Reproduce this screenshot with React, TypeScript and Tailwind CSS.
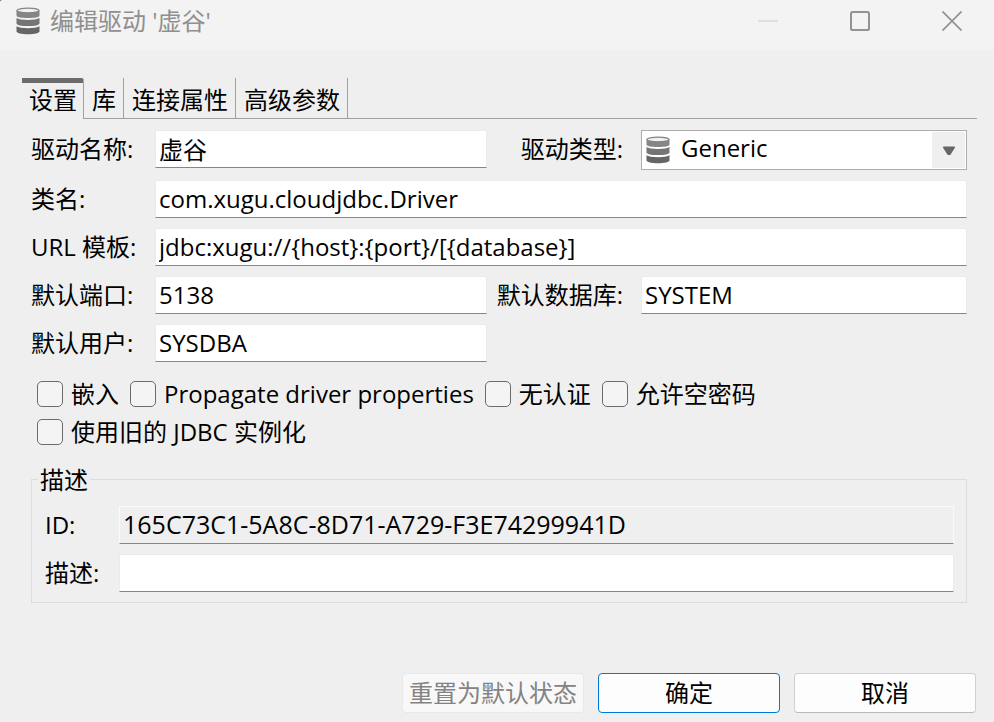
import { useId, useState } from 'react';
import type { ReactNode } from 'react';

const inputClass =
  'block h-[38px] w-full min-w-0 border border-[#ebebeb] border-b-[#868686] bg-white pb-[2px] pl-[3px] pr-1 leading-8 text-black outline-none';

function DatabaseIcon({ className }: { className?: string }) {
  return (
    <svg viewBox="0 0 24 28" className={className} aria-hidden="true">
      <path d="M.5 3.600V8.500c0 1.800 5 2.500 11.500 2.500s11.500-.7 11.500-2.500V3.600z" fill="#858585" />
      <ellipse cx="12" cy="3.500" rx="11" ry="2.400" fill="#f1f1f1" stroke="#858585" strokeWidth="1.200" />
      <path d="M2.500 4.600c2.500 1.400 16.500 1.400 19 0l1.500 1.400H1z" fill="#858585" />
      <path d="M.5 11c1.800 1.300 6 2 11.500 2s9.700-.7 11.500-2v5.500c0 1.600-5 2.600-11.500 2.600S.5 18.100.5 16.500z" fill="#757575" />
      <path d="M.5 19.200c1.800 1.300 6 2 11.500 2s9.700-.7 11.500-2v5.300c0 1.600-5 2.700-11.500 2.700S.5 26.100.5 24.500z" fill="#666666" />
    </svg>
  );
}

function TitleBar() {
  return (
    <header className="flex h-[50px] items-start justify-between bg-[#f3f3f3] pl-4 pr-8 text-[#8f8f8f]">
      <div className="flex h-[42px] items-center gap-[10px]">
        <DatabaseIcon className="h-7 w-6" />
        <h1 className="leading-8">编辑驱动 '虚谷'</h1>
      </div>
      <div className="flex h-[42px] items-center gap-[72px]">
        <button type="button" aria-label="最小化" disabled>
          <svg viewBox="0 0 20 20" className="block size-5" fill="none" stroke="#dfdfdf" strokeWidth="2">
            <path d="M0 10h20" />
          </svg>
        </button>
        <button type="button" aria-label="最大化">
          <svg viewBox="0 0 20 20" className="block size-5" fill="none" stroke="#929292" strokeWidth="2">
            <rect x="1" y="1" width="18" height="18" rx="1.500" />
          </svg>
        </button>
        <button type="button" aria-label="关闭">
          <svg viewBox="0 0 20 20" className="block size-5" fill="none" stroke="#929292" strokeWidth="1.700">
            <path d="M.5.5l19 19M19.500.5l-19 19" />
          </svg>
        </button>
      </div>
    </header>
  );
}

const tabs = ['设置', '库', '连接属性', '高级参数'];

function TabBar() {
  return (
    <div role="tablist" className="flex h-[41px] pl-[22px] pr-[17px]">
      {tabs.map((tab, index) =>
        index === 0 ? (
          <button
            key={tab}
            type="button"
            role="tab"
            aria-selected="true"
            className="rounded-tr-[3px] border-r border-t-[5px] border-r-[#a0a0a0] border-t-[#6b6b6b] pb-[2px] pl-[7px] pr-[6px] leading-[34px]"
          >
            {tab}
          </button>
        ) : (
          <button
            key={tab}
            type="button"
            role="tab"
            aria-selected="false"
            className="border-b border-r border-[#a0a0a0] pb-px pl-2 pr-[7px] pt-[5px] leading-[34px]"
          >
            {tab}
          </button>
        ),
      )}
      <div className="flex-1 border-b border-[#a0a0a0]" />
    </div>
  );
}

function Label({ htmlFor, end, children }: { htmlFor: string; end?: boolean; children: ReactNode }) {
  return (
    <label
      htmlFor={htmlFor}
      className={end ? 'whitespace-nowrap pr-[18px] text-right leading-[38px]' : 'whitespace-nowrap leading-[38px]'}
    >
      {children}
    </label>
  );
}

function CheckBox({ label }: { label: string }) {
  const id = useId();
  return (
    <div className="flex h-[38px] items-center gap-2">
      <input
        id={id}
        type="checkbox"
        className="size-[26px] shrink-0 appearance-none rounded-[5px] border border-[#6b6b6b] bg-[#f4f4f4] checked:bg-[#0067c0]"
      />
      <label htmlFor={id} className="whitespace-nowrap leading-[38px]">
        {label}
      </label>
    </div>
  );
}

export default function App() {
  const [name, setName] = useState('虚谷');
  const [className, setClassName] = useState('com.xugu.cloudjdbc.Driver');
  const [url, setUrl] = useState('jdbc:xugu://{host}:{port}/[{database}]');
  const [port, setPort] = useState('5138');
  const [database, setDatabase] = useState('SYSTEM');
  const [user, setUser] = useState('SYSDBA');
  const [description, setDescription] = useState('');

  return (
    <div className="bg-[#666666]">
      <div className="flex min-h-screen flex-col overflow-hidden rounded-tl-[3px] bg-[#efefef] font-['Open_Sans','Noto_Sans_CJK_SC',sans-serif] text-[24px] text-black">
        <TitleBar />
        <main className="flex flex-1 flex-col pt-7">
          <TabBar />
          <form className="flex flex-1 flex-col" onSubmit={(event) => event.preventDefault()}>
            <div className="pl-[31px] pr-[27px] pt-[11px]">
              <div className="grid grid-cols-[124px_minmax(0,332fr)_154px_minmax(0,326fr)] items-start gap-y-[10px]">
                <Label htmlFor="name">驱动名称:</Label>
                <input id="name" className={inputClass} value={name} onChange={(e) => setName(e.target.value)} />
                <Label htmlFor="type" end>
                  驱动类型:
                </Label>
                <div className="relative">
                  <select
                    id="type"
                    className="block h-10 w-full appearance-none border border-[#acacb0] bg-white pb-[5px] pl-[39px] pr-10 leading-8 outline-none"
                  >
                    <option>Generic</option>
                  </select>
                  <DatabaseIcon className="pointer-events-none absolute left-[5px] top-[6px] h-7 w-6" />
                  <span className="pointer-events-none absolute bottom-[2px] right-[2px] top-[2px] flex w-[33px] items-center justify-center bg-[#efefef]">
                    <svg viewBox="0 0 14 10" className="mt-[2px] h-[10px] w-[14px]" aria-hidden="true">
                      <path d="M1.500.5h11l.6 1L8.300 9H5.700L.9 1.500z" fill="#666666" />
                    </svg>
                  </span>
                </div>

                <Label htmlFor="class">类名:</Label>
                <div className="col-span-3">
                  <input id="class" className={inputClass} value={className} onChange={(e) => setClassName(e.target.value)} />
                </div>

                <Label htmlFor="url">URL 模板:</Label>
                <div className="col-span-3">
                  <input id="url" className={inputClass} value={url} onChange={(e) => setUrl(e.target.value)} />
                </div>

                <Label htmlFor="port">默认端口:</Label>
                <input id="port" className={inputClass} value={port} onChange={(e) => setPort(e.target.value)} />
                <Label htmlFor="database" end>
                  默认数据库:
                </Label>
                <input id="database" className={inputClass} value={database} onChange={(e) => setDatabase(e.target.value)} />

                <Label htmlFor="user">默认用户:</Label>
                <input id="user" className={inputClass} value={user} onChange={(e) => setUser(e.target.value)} />
              </div>

              <div className="flex flex-wrap gap-x-[11px] pl-[6px] pt-[13px]">
                <CheckBox label="嵌入" />
                <CheckBox label="Propagate driver properties" />
                <CheckBox label="无认证" />
                <CheckBox label="允许空密码" />
                <CheckBox label="使用旧的 JDBC 实例化" />
              </div>

              <fieldset className="mt-4 border border-[#dcdcdc] pb-[10px] pl-3 pr-3">
                <legend className="-ml-[6px] px-[2px] pt-[2px] leading-[22px]">描述</legend>
                <div className="grid grid-cols-[74px_minmax(0,1fr)] gap-y-[10px] pl-px pt-[15px]">
                  <Label htmlFor="id">ID:</Label>
                  <input
                    id="id"
                    readOnly
                    value="165C73C1-5A8C-8D71-A729-F3E74299941D"
                    className="block h-[38px] w-full min-w-0 border border-[#fafafa] border-b-[#868686] bg-[#efefef] pb-[2px] pl-[3px] pr-1 text-[25px] leading-8 outline-none"
                  />
                  <Label htmlFor="description">描述:</Label>
                  <input
                    id="description"
                    className={inputClass}
                    value={description}
                    onChange={(e) => setDescription(e.target.value)}
                  />
                </div>
              </fieldset>
            </div>

            <footer className="mt-auto flex justify-end gap-[14px] pb-[9px] pl-4 pr-[18px] pt-6">
              <button
                type="button"
                disabled
                className="h-10 w-[182px] whitespace-nowrap rounded-[4px] border border-[#e8e8e8] bg-[#f8f8f8] leading-9 text-[#838383]"
              >
                重置为默认状态
              </button>
              <button type="submit" className="h-10 w-[182px] rounded-[4px] border border-[#0078d4] bg-[#fdfdfd] leading-9">
                确定
              </button>
              <button
                type="button"
                className="h-10 w-[182px] rounded-[4px] border border-[#d0d0d0] border-b-[#bababa] bg-[#fdfdfd] leading-9"
              >
                取消
              </button>
            </footer>
          </form>
        </main>
      </div>
    </div>
  );
}
